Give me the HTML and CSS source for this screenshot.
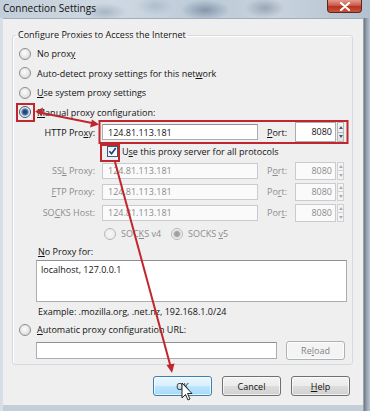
FILE: index.html
```html
<!DOCTYPE html>
<html lang="en">
<head>
    <meta charset="UTF-8">
    <title>Connection Settings</title>
    <link rel="stylesheet" href="styles.css">
</head>
<body>
    <div class="window">
        <div class="titlebar">
            <span class="title">Connection Settings</span>
            <span class="close">
                <svg width="12" height="9" viewBox="0 0 12 9"><path d="M2 1 L10 8 M10 1 L2 8" stroke="#fff" stroke-width="2.2" stroke-linecap="round"/></svg>
            </span>
        </div>
        <div class="client">
            <fieldset class="group">
                <legend>Configure Proxies to Access the Internet</legend>
                <div class="opt first"><span class="radio"></span><span>No prox<u>y</u></span></div>
                <div class="opt"><span class="radio"></span><span>Auto-detect proxy settings for this net<u>w</u>ork</span></div>
                <div class="opt"><span class="radio"></span><span><u>U</u>se system proxy settings</span></div>
                <div class="opt"><span class="radio on"></span><span><u>M</u>anual proxy configuration:</span></div>

                <div class="proxies">
                    <div class="prow http">
                        <span class="plabel">HTTP Pro<u>x</u>y:</span>
                        <span class="field"><span class="text">124.81.113.181</span></span>
                        <span class="portlabel"><u>P</u>ort:</span>
                        <span class="port"><span class="num">8080</span><span class="spin"><i class="up"></i><i class="down"></i></span></span>
                    </div>
                    <div class="prow checkrow">
                        <span></span>
                        <span class="checkwrap">
                            <span class="check"><svg width="10" height="10" viewBox="0 0 10 10"><path d="M1.5 5.2 L4 8 L8.6 1.6" fill="none" stroke="#1d3f73" stroke-width="1.8"/></svg></span>
                            <span>U<u>s</u>e this proxy server for all protocols</span>
                        </span>
                    </div>
                    <div class="prow off">
                        <span class="plabel">SS<u>L</u> Proxy:</span>
                        <span class="field"><span class="text">124.81.113.181</span></span>
                        <span class="portlabel">P<u>o</u>rt:</span>
                        <span class="port"><span class="num">8080</span><span class="spin"><i class="up"></i><i class="down"></i></span></span>
                    </div>
                    <div class="prow off">
                        <span class="plabel"><u>F</u>TP Proxy:</span>
                        <span class="field"><span class="text">124.81.113.181</span></span>
                        <span class="portlabel">Po<u>r</u>t:</span>
                        <span class="port"><span class="num">8080</span><span class="spin"><i class="up"></i><i class="down"></i></span></span>
                    </div>
                    <div class="prow off">
                        <span class="plabel">SO<u>C</u>KS Host:</span>
                        <span class="field"><span class="text">124.81.113.181</span></span>
                        <span class="portlabel">Por<u>t</u>:</span>
                        <span class="port"><span class="num">8080</span><span class="spin"><i class="up"></i><i class="down"></i></span></span>
                    </div>
                    <div class="prow socks off">
                        <span></span>
                        <span class="socksopts">
                            <span class="radio dim"></span><span class="v4">SOC<u>K</u>S v4</span>
                            <span class="radio dim on"></span><span>SOCKS <u>v</u>5</span>
                        </span>
                    </div>
                </div>

                <div class="noproxy">
                    <div class="nplabel"><u>N</u>o Proxy for:</div>
                    <div class="area">localhost, 127.0.0.1</div>
                    <div class="example">Example: .mozilla.org, .net.nz, 192.168.1.0/24</div>
                </div>

                <div class="opt auto"><span class="radio"></span><span><u>A</u>utomatic proxy configuration URL:</span></div>
                <div class="urlrow">
                    <span class="url"></span>
                    <span class="btn reload">Re<u>l</u>oad</span>
                </div>
            </fieldset>
            <div class="buttons">
                <span class="btn ok">OK</span>
                <span class="btn">Cancel</span>
                <span class="btn"><u>H</u>elp</span>
            </div>
        </div>

        <!-- annotations drawn over the dialog -->
        <svg class="marks" width="370" height="411" viewBox="0 0 370 411">
            <g fill="none" stroke="#c0262d" stroke-width="2">
                <rect x="17" y="104" width="17" height="17"/>
                <rect x="99.5" y="121" width="248" height="22"/>
                <rect x="101" y="145" width="18" height="16"/>
                <path d="M37 112 L97 124"/>
                <path d="M115 162 L171 368"/>
            </g>
            <g fill="#c0262d">
                <path d="M35 111.5 L43 107.5 L42 115.5 Z"/>
                <path d="M99 124.5 L90 127.5 L92 119.5 Z"/>
                <path d="M172 373 L166.5 365 L174.5 363.5 Z"/>
            </g>
            <path d="M182 383 L182 398 L185.5 394.5 L188 400 L190 399 L187.5 393.5 L192 393.5 Z" fill="#fff" stroke="#111" stroke-width="0.9" stroke-linejoin="round"/>
        </svg>
    </div>
</body>
</html>
```

FILE: styles.css
```css
body{
    margin: 0;
    width: 370px;
    height: 411px;
    overflow: hidden;
    font-family: "Open Sans", "Noto Sans", sans-serif;
    font-size: 9px;
    color: #121212;
}
u{
    text-decoration-thickness: 1px;
    text-underline-offset: 1px;
}
.window{
    position: relative;
    height: 411px;
    display: flex;
    flex-direction: column;
    background: linear-gradient(to right, #d6dfe8 0, #d6dfe8 3px, #c4ced8 3px, #c4ced8 363px, #6d7882 364px, #9aa7b4 367px, #b7c4d0 370px);
}
.titlebar{
    height: 18px;
    flex: none;
    display: flex;
    justify-content: space-between;
    align-items: flex-start;
    padding-left: 3px;
    background:
        radial-gradient(ellipse 22px 9px at 105px 12px, rgba(120,140,160,.45), transparent),
        radial-gradient(ellipse 25px 10px at 205px 10px, rgba(90,110,135,.55), transparent),
        radial-gradient(ellipse 20px 10px at 265px 8px, rgba(110,125,140,.5), transparent),
        radial-gradient(ellipse 18px 9px at 155px 6px, rgba(140,160,180,.4), transparent),
        linear-gradient(to right, #c2ced9, #cfd9e3 30%, #bccad7 55%, #c8d3de 75%, #b3c1ce);
}
.title{
    font-size: 10px;
    line-height: 16px;
    color: #111;
}
.close{
    width: 35px;
    height: 13px;
    margin-right: 8px;
    box-sizing: border-box;
    display: flex;
    align-items: center;
    justify-content: center;
    border: 1px solid #5e241f;
    border-top: none;
    border-radius: 0 0 4px 4px;
    background: linear-gradient(#e29b8e, #cc5a48 45%, #b8321f 55%, #c9553c);
}
.client{
    flex: none;
    height: 387px;
    margin: 0 7px 0 3px;
    box-sizing: border-box;
    background: #efefef;
    border-top: 1px solid #a2aeba;
    padding-top: 10px;
}
.group{
    margin: 0 10px 0 9px;
    padding: 0 0 3px 0;
    border: 1px solid #d3dbe1;
    border-radius: 3px;
    box-shadow: inset 1px 1px 0 #fff;
}
.group legend{
    margin-left: 3px;
    padding: 0 2px;
    line-height: 12px;
}
.opt{
    height: 19.5px;
    display: flex;
    align-items: center;
    padding-left: 6px;
    gap: 6px;
}
.opt.first{
    margin-top: 3px;
}
.radio{
    width: 10px;
    height: 10px;
    flex: none;
    border-radius: 50%;
    border: 1px solid #8a8e91;
    background: radial-gradient(circle at 45% 40%, #fdfdfd, #e3e3e3 60%, #cfcfcf);
}
.radio.on{
    border-color: #3d5c7c;
    background: radial-gradient(circle at 50% 50%, #1b3d62 0, #2a5683 2.2px, #7e9cbc 3.4px, #dfe7ee 4.2px, #f5f5f5 5px);
}
.radio.dim{
    border-color: #b4b7ba;
    background: radial-gradient(circle, #f7f7f7, #e8e8e8);
}
.radio.dim.on{
    background: radial-gradient(circle, #9a9a9a 0, #a5a5a5 2.4px, #d0d0d0 3.4px, #f3f3f3 4.4px);
}

.proxies .prow{
    display: grid;
    grid-template-columns: 89px 165px 28px 49px;
    align-items: center;
    height: 21px;
}
.proxies .http{
    height: 20px;
}
.proxies .checkrow{
    height: 18px;
}
.plabel{
    text-align: right;
    padding-right: 7px;
    white-space: nowrap;
}
.field{
    width: 156px;
    height: 16px;
    box-sizing: border-box;
    border: 1px solid #abadb3;
    border-top-color: #8e9095;
    background: #fff;
    display: flex;
    align-items: center;
    padding-left: 5px;
}
.port{
    width: 49px;
    height: 20px;
    box-sizing: border-box;
    display: flex;
    align-items: center;
}
.port .num{
    width: 41px;
    height: 18px;
    box-sizing: border-box;
    border: 1px solid #abadb3;
    background: #fff;
    text-align: right;
    padding-right: 3px;
    line-height: 16px;
}
.spin{
    width: 7px;
    height: 18px;
    margin-left: 1px;
    display: flex;
    flex-direction: column;
    border: 1px solid #b3b8bd;
    box-sizing: border-box;
    background: linear-gradient(#f6f6f6, #dfe2e5);
}
.spin i{
    flex: 1;
    position: relative;
}
.spin .up{
    border-bottom: 1px solid #b3b8bd;
}
.spin i::after{
    content: "";
    position: absolute;
    left: 0.5px;
    top: 2px;
    border: 2.5px solid transparent;
}
.spin .up::after{
    top: 0.5px;
    border-bottom: 3px solid #4d5863;
}
.spin .down::after{
    top: 2.5px;
    border-top: 3px solid #4d5863;
}
.http .port{
    height: 20px;
}
.http .port .num{
    height: 20px;
    line-height: 18px;
}
.http .spin{
    height: 20px;
}
.off{
    color: #8d8d8d;
}
.off .field,
.off .port .num{
    background: #fafafa;
    border-color: #c9cbcf;
    color: #8a8a8a;
}
.off .spin{
    border-color: #cfd2d5;
    background: #f4f4f4;
}
.off .spin .up{
    border-bottom-color: #cfd2d5;
}
.off .spin .up::after{
    border-bottom-color: #a8adb2;
}
.off .spin .down::after{
    border-top-color: #a8adb2;
}
.checkwrap{
    grid-column: 2 / 5;
    display: flex;
    align-items: center;
    gap: 4px;
    padding-left: 5px;
}
.check{
    width: 11px;
    height: 11px;
    box-sizing: border-box;
    border: 1px solid #3a5a7c;
    background: linear-gradient(135deg, #e6eef6, #ffffff);
    display: flex;
    align-items: center;
    justify-content: center;
}
.socksopts{
    grid-column: 2 / 5;
    display: flex;
    align-items: center;
    padding-left: 2px;
    gap: 5px;
}
.socksopts .v4{
    margin-right: 5px;
}

.noproxy{
    padding-left: 23px;
}
.nplabel{
    height: 16px;
    line-height: 16px;
    padding-left: 2px;
}
.area{
    width: 311px;
    height: 42px;
    box-sizing: border-box;
    border: 1px solid #abadb3;
    border-top-color: #8e9095;
    background: #fff;
    padding: 3px 0 0 4px;
    line-height: 12px;
}
.example{
    height: 18px;
    line-height: 18px;
    padding-left: 2px;
    margin-top: 1px;
}
.opt.auto{
    height: 17px;
}
.urlrow{
    display: flex;
    align-items: center;
    height: 21px;
    margin-top: 2px;
    padding-left: 23px;
}
.url{
    width: 241px;
    height: 17px;
    box-sizing: border-box;
    border: 1px solid #abadb3;
    border-top-color: #8e9095;
    background: #fff;
}
.btn{
    height: 20px;
    box-sizing: border-box;
    display: flex;
    align-items: center;
    justify-content: center;
    border: 1px solid #707070;
    border-radius: 3px;
    background: linear-gradient(#f3f3f3, #ebebeb 48%, #dddddd 52%, #cfcfcf);
    box-shadow: inset 0 0 0 1px rgba(255,255,255,.7);
}
.btn.reload{
    width: 59px;
    height: 19px;
    margin-left: 9px;
    border-color: #adb2b5;
    background: #f4f4f4;
    color: #838383;
}
.buttons{
    display: flex;
    justify-content: flex-end;
    gap: 10px;
    margin: 11px 13px 0 0;
}
.buttons .btn{
    width: 59px;
}
.btn.ok{
    border-color: #3c7fb1;
    background: linear-gradient(#eaf6fd, #d9f0fc 48%, #bee6fd 52%, #a7d9f5);
}
.marks{
    position: absolute;
    left: 0;
    top: 0;
    pointer-events: none;
}
```
